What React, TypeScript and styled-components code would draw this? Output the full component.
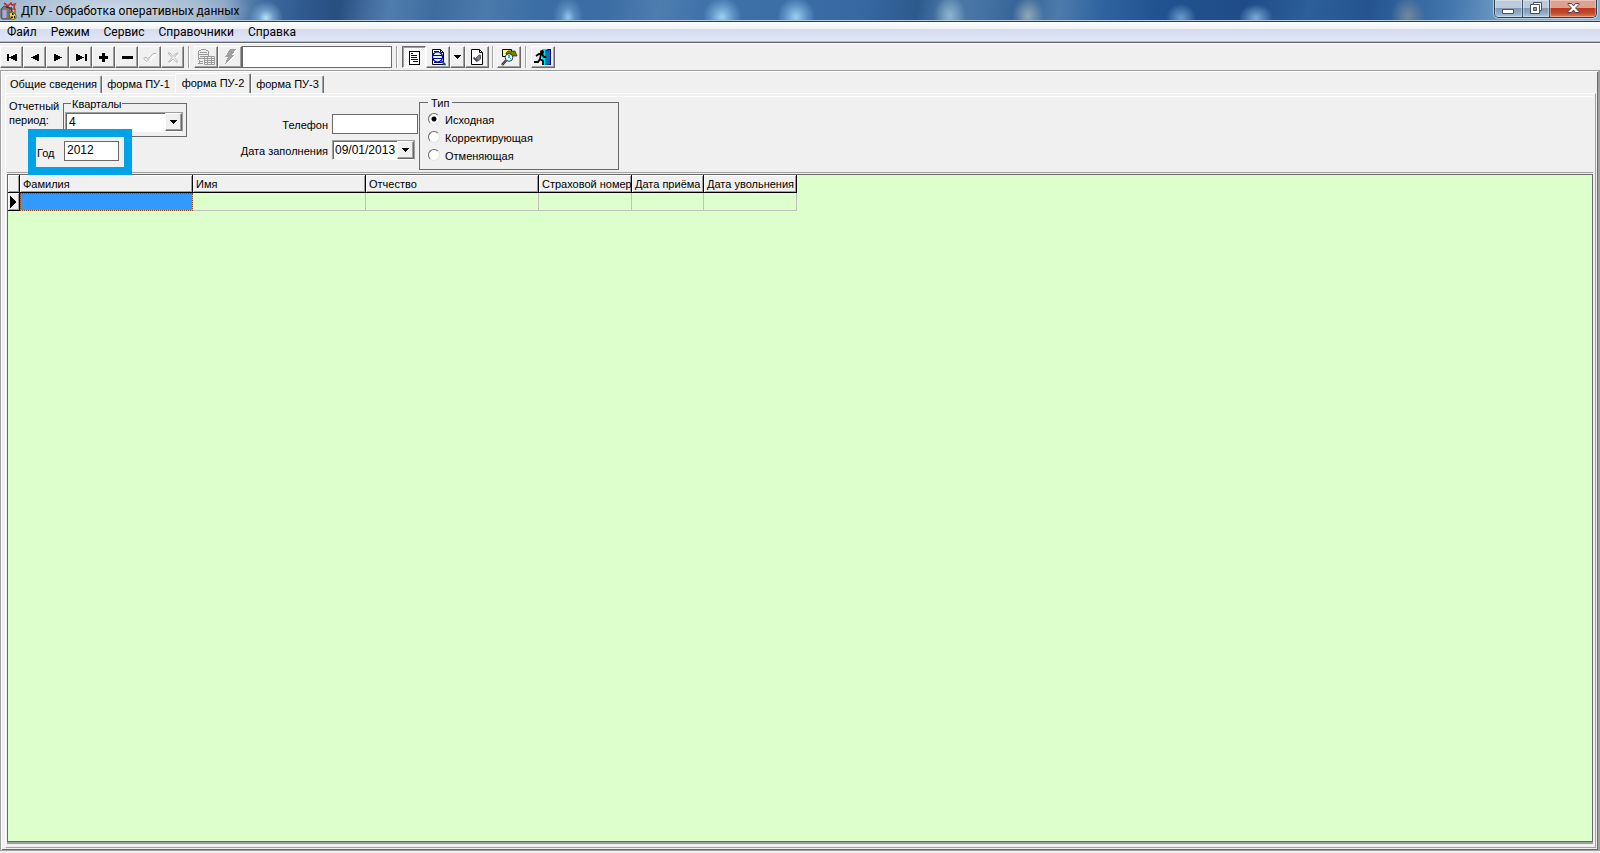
import React, { useState } from 'react';
import styled, { createGlobalStyle, css } from 'styled-components';

const face = '#f0f0f0';
const green = '#dcffcc';
const dark = '#696969';
const gray = '#a0a0a0';

const GlobalStyle = createGlobalStyle`
  *, *::after { box-sizing: border-box; }
  html, body, #root { height: 100%; }
  body { margin: 0; background: ${face}; overflow: hidden; }
  body, button, legend {
    font-family: "Liberation Sans", Arial, sans-serif;
    font-size: 11px;
    line-height: 14px;
    color: #000;
  }
  input, select { font: 12px/14px "Liberation Sans", Arial, sans-serif; color: #000; }
  svg { display: block; }
`;

const Window = styled.div`
  display: flex;
  flex-direction: column;
  min-height: 100vh;
`;

/* ---------- title bar ---------- */

const TitleBar = styled.header`
  display: flex;
  align-items: flex-start;
  height: 22px;
  border-bottom: 1px solid #2b3e57;
  box-shadow: inset 0 -1px 0 #b4cbe0;
  background:
    radial-gradient(ellipse 140px 30px at 112px 10px, rgba(214, 225, 236, .9), rgba(190, 207, 224, .6) 65%, transparent),
    radial-gradient(ellipse 17px 17px at 266px 18px, #b9e1fb, rgba(140, 190, 230, .6) 45%, transparent),
    radial-gradient(ellipse 15px 20px at 568px 17px, #8fc6ee, rgba(120, 170, 215, .5) 45%, transparent),
    radial-gradient(ellipse 19px 20px at 722px 17px, #9bd0f5, rgba(120, 175, 220, .6) 55%, transparent),
    radial-gradient(ellipse 19px 20px at 796px 17px, #9bd0f5, rgba(120, 175, 220, .6) 55%, transparent),
    radial-gradient(ellipse 16px 20px at 950px 16px, #8fb5cf, transparent),
    radial-gradient(ellipse 16px 20px at 1028px 16px, #8fa9b7, transparent),
    radial-gradient(ellipse 15px 14px at 1181px 18px, #6a9ccc, transparent),
    radial-gradient(ellipse 17px 14px at 1256px 18px, #7aabd8, transparent),
    radial-gradient(ellipse 17px 20px at 1408px 16px, #71899b, transparent),
    linear-gradient(100deg, #8fa9c4 0, #7e9dbf 220px, #3f6b9f 260px, #2f5a90 300px, #27507f 335px, #40699a 360px, #4f7dad 385px, #3f6c9f 430px, #4b7aac 480px, #3b6ea5 530px, #3c6da4 600px, #4e7db0 650px, #4173aa 690px, #3768a2 850px, #2d5a8e 905px, #4d7aa8 935px, #4371a2 975px, #346294 1005px, #4d7bab 1045px, #3064a0 1085px, #215390 1140px, #1f4c88 1230px, #2d5f99 1290px, #255490 1350px, #4376ad 1430px, #76a1c9 1490px, #95b5d1 1600px);
`;

const TitleIcon = styled.span`
  padding: 2px 0 0;
`;

const AppTitle = styled.h1`
  flex: 1;
  margin: 0;
  padding: 3px 0 0 4px;
  font: 12px/16px Roboto, sans-serif;
`;

const Caption = styled.div`
  display: flex;
  height: 18px;
  margin-right: 3px;
  border: 1px solid #2c3a4c;
  border-top: 0;
  border-radius: 0 0 5px 5px;
  box-shadow: 0 0 0 1px rgba(225, 238, 250, .6);
  overflow: hidden;
`;

const CaptionButton = styled.button<{ $close?: boolean }>`
  display: flex;
  align-items: center;
  justify-content: center;
  width: ${p => (p.$close ? 47 : 27)}px;
  padding: 0 0 2px;
  border: 0;
  border-left: 1px solid #3f5068;
  box-shadow: inset 0 0 0 1px rgba(255, 255, 255, .35);
  background: ${p =>
    p.$close
      ? 'linear-gradient(#dea08f 0 8px, #bd3720 8px, #c2482c 13px, #dd7f57)'
      : 'linear-gradient(#bccbdc 0 8px, #7f98b4 8px, #91a9c2 13px, #b3cadd)'};
  &:first-child { border-left: 0; }
`;

/* ---------- menu ---------- */

const MenuBar = styled.nav`
  display: flex;
  align-items: center;
  height: 21px;
  border-bottom: 1px solid #62656e;
  box-shadow: inset 0 -1px 0 #b5bdd2;
  background: linear-gradient(#fff 0, #eef1f8 7px, #d6dcef 7px, #e1e6f6 18px);
`;

const MenuItem = styled.button`
  padding: 0 7px 1px;
  border: 0;
  background: none;
  font: 12px/16px Roboto, sans-serif;
`;

/* ---------- toolbar ---------- */

const Toolbar = styled.div`
  display: flex;
  align-items: center;
  height: 27px;
  border-top: 1px solid #fff;
`;

const Group = styled.div`
  display: flex;
`;

const raised = css`
  border: 1px solid;
  border-color: #fff ${dark} ${dark} #fff;
  box-shadow: inset -1px -1px 0 ${gray};
`;

const ToolButton = styled.button<{ $pressed?: boolean; $width?: number }>`
  display: flex;
  align-items: center;
  justify-content: center;
  width: ${p => p.$width ?? 24}px;
  height: 22px;
  padding: 0;
  ${raised}
  background: ${face};
  ${p =>
    p.$pressed &&
    css`
      border-color: ${dark} #fff #fff ${dark};
      box-shadow: inset 1px 1px 0 ${gray};
      background: repeating-conic-gradient(#fff 0 25%, ${face} 0 50%) 0 0 / 2px 2px;
    `}
`;

const Separator = styled.span<{ $tight?: boolean }>`
  width: 2px;
  height: 22px;
  margin: 0 ${p => (p.$tight ? 3 : 4)}px;
  border-left: 1px solid ${gray};
  border-right: 1px solid #fff;
`;

const textBox = css`
  border: 1px solid ${dark};
  border-radius: 0;
  background: #fff;
  outline: 0;
`;

const SearchBox = styled.input`
  width: 150px;
  height: 22px;
  ${textBox}
`;

/* ---------- tabs ---------- */

const TabFrame = styled.main`
  flex: 1;
  display: flex;
  flex-direction: column;
  padding: 2px 2px 2px 4px;
  border: 1px solid ${gray};
  border-right-width: 2px;
  box-shadow: inset 1px 1px 0 #fff, inset -1px -1px 0 ${dark};
  margin-bottom: 2px;
`;

const TabStrip = styled.div`
  display: flex;
  align-items: flex-end;
  height: 20px;
`;

const Tab = styled.button<{ $active?: boolean; $before?: boolean; $wide?: boolean }>`
  width: ${p => (p.$wide ? 97 : p.$active ? 76 : 73)}px;
  height: ${p => (p.$active ? 20 : 18)}px;
  padding: 0 0 ${p => (p.$active ? 2 : 1)}px;
  border: 1px solid;
  border-color: #fff ${dark} transparent #fff;
  border-bottom: 0;
  border-radius: 2px 2px 0 0;
  box-shadow: inset -1px 0 0 ${gray};
  background: ${face};
  white-space: nowrap;
  ${p => p.$before && css`
    border-right-color: transparent;
    box-shadow: none;
  `}
`;

const TabPage = styled.section`
  flex: 1;
  display: flex;
  flex-direction: column;
  border-top: 1px solid #fff;
  border-left: 1px solid #fff;
  padding: 2px 2px 5px 1px;
  border-right: 1px solid ${gray};
  border-bottom: 1px solid ${gray};
`;

/* ---------- form ---------- */

const Form = styled.form`
  display: flex;
  align-items: flex-start;
  height: 77px;
  border-top: 1px solid #fff;
  border-bottom: 1px solid ${gray};
`;

const Period = styled.div`
  display: grid;
  grid-template-columns: 54px 124px;
  width: 222px;
  padding: 1px 0 0 2px;
`;

const PeriodLabel = styled.label`
  padding-top: 1px;
`;

const Quarters = styled.fieldset`
  min-width: 0;
  height: 39px;
  margin: 0;
  padding: 4px 1px 0;
  border: 1px solid ${dark};
`;

const Legend = styled.legend`
  margin-left: 6px;
  padding: 2px 1px 0;
  line-height: 8px;
`;

const Drop = styled.span<{ $wide?: boolean }>`
  display: flex;
  width: ${p => (p.$wide ? 118 : 83)}px;
  height: 20px;
  border: 1px solid;
  border-color: ${gray} ${gray} #fff ${gray};
  box-shadow: inset 1px 1px 0 ${dark};
  background: #fff;
`;

const Select = styled.select`
  flex: 1;
  min-width: 0;
  padding: 0 0 0 3px;
  border: 0;
  outline: 0;
  appearance: none;
  background: none;
`;

const DateInput = styled.input`
  flex: 1;
  min-width: 0;
  padding: 0 0 0 2px;
  border: 0;
  outline: 0;
  background: none;
`;

const DropButton = styled.button`
  display: flex;
  align-items: center;
  justify-content: center;
  width: 17px;
  padding: 0;
  ${raised}
  background: ${face};
`;

const YearRow = styled.div`
  position: relative;
  grid-column: 1 / 3;
  display: flex;
  align-items: flex-end;
  padding: 4px 0 0 28px;
  & > label { width: 27px; padding-bottom: 1px; }
  &::after {
    content: '';
    position: absolute;
    left: 19px;
    top: -8px;
    width: 104px;
    height: 46px;
    border: 8px solid #00a2e8;
    pointer-events: none;
  }
`;

const YearInput = styled.input`
  width: 55px;
  height: 20px;
  padding: 0 2px 2px;
  ${textBox}
`;

const Contacts = styled.div`
  display: grid;
  grid-template-columns: 99px 86px;
  align-items: center;
  gap: 6px 4px;
  padding: 17px 1px 0 0;
  & > label { text-align: right; white-space: nowrap; padding-top: 1px; }
`;

const PhoneInput = styled.input`
  width: 86px;
  height: 20px;
  ${textBox}
`;

const TypeBox = styled.fieldset`
  display: flex;
  flex-direction: column;
  gap: 4px;
  width: 200px;
  height: 73px;
  margin: 0;
  padding: 6px 8px 0;
  border: 1px solid ${dark};
  & > legend { margin-left: 0; padding: 2px 3px 0; }
`;

const RadioLabel = styled.label`
  display: flex;
  align-items: center;
  gap: 5px;
`;

const Radio = styled.input`
  appearance: none;
  width: 12px;
  height: 12px;
  margin: 0 0 2px;
  border: 1px solid;
  border-color: ${dark} #e3e3e3 #e3e3e3 ${dark};
  border-radius: 50%;
  background: #fff;
  &:checked { background: radial-gradient(circle, #000 2px, #fff 3px); }
`;

/* ---------- data grid ---------- */

const GridArea = styled.div`
  flex: 1;
  margin-top: 1px;
  border: 1px solid ${dark};
  box-shadow: 0 2px 0 ${gray};
  background: ${green};
`;

const Grid = styled.table`
  table-layout: fixed;
  width: 789px;
  border-collapse: separate;
  border-spacing: 0;
`;

const Head = styled.th`
  height: 18px;
  padding: 0 0 0 3px;
  border: solid #000;
  border-width: 0 1px 1px 0;
  box-shadow: inset 1px 1px 0 #fff, inset -1px -1px 0 ${gray};
  background: ${face};
  font-weight: normal;
  text-align: left;
  white-space: nowrap;
`;

const Cell = styled.td<{ $selected?: boolean }>`
  height: 18px;
  padding: 0;
  border: solid #c0c0c0;
  border-width: 0 1px 1px 0;
  ${p =>
    p.$selected &&
    css`
      background: #3399ff;
      outline: 1px dotted #8a4a10;
      outline-offset: -1px;
    `}
`;

const Marker = styled.td`
  padding: 0 0 0 2px;
  border: solid #000;
  border-width: 0 1px 1px 0;
  box-shadow: inset 1px 1px 0 #fff, inset -1px -1px 0 ${gray};
  background: ${face};
`;

/* ---------- icons ---------- */

type GlyphProps = { d: string; w?: number; h?: number; fill?: string };

const Glyph = ({ d, w = 16, h = 16, fill = '#000' }: GlyphProps) => (
  <svg width={w} height={h} viewBox={`0 0 ${w} ${h}`} fill={fill} shapeRendering="crispEdges" aria-hidden="true">
    <path d={d} />
  </svg>
);

const Caret = () => <Glyph w={7} h={4} d="M0 0h7v1H0zM1 1h5v1H1zM2 2h3v1H2zM3 3h1v1H3z" />;

const leftTriangle = (x: number) => `M${x} 8.500l8 -4v8z`;
const rightTriangle = (x: number) => `M${x} 4.500l8 4l-8 4z`;

const AppIcon = () => (
  <svg width="17" height="18" viewBox="0 0 17 18" aria-hidden="true">
    <path d="M1 7l3-3 5 1 2 2v10H2L1 15z" fill="#77777c" stroke="#4a4a52" />
    <path d="M2.500 8h4v8h-4z" fill="#a9a9dc" />
    <path d="M10 7h5v8h-5z" fill="#c9bfa0" stroke="#5b4a4a" />
    <path d="M4 1l4 3 3-3 1 2 3-1-1 3 1 3" fill="none" stroke="#c03038" strokeWidth="1.600" />
    <path d="M6 5l4 1M11 5l1 5" stroke="#7a1c22" strokeWidth="1.400" />
    <path d="M9 11l4-1 3 3v3l-3 1.500-3-1.500z" fill="#e9d92a" stroke="#5a4c00" strokeWidth=".8" />
    <path d="M12 11h1.500v2H12zM11 14.500h2v1.500h-2zM14 14h1v2h-1z" fill="#201b00" />
  </svg>
);

const CheckIcon = () => (
  <svg width="16" height="16" viewBox="0 0 16 16" fill="none" aria-hidden="true">
    <path d="M3 10l3 3 8-8" stroke="#fff" strokeWidth="1.500" />
    <path d="M1.500 9.500l2.500-1.500 1.500 2 3-2.500L11 4.500h3M2 10l3 2.500 3-3" stroke="#b4b4b4" />
  </svg>
);

const CancelIcon = () => (
  <svg width="16" height="16" viewBox="0 0 16 16" fill="none" aria-hidden="true">
    <path d="M5 5l9 9M14 5l-9 9" stroke="#fff" strokeWidth="1.500" />
    <path d="M3 4h2l3 3.500L11.500 4H13L9.500 8.500 13 13h-1.500L8 10l-3 3H3.500L7 8.500z" stroke="#b4b4b4" />
  </svg>
);

const DatabaseIcon = () => (
  <svg width="18" height="18" viewBox="0 0 18 18" fill="none" stroke="#9a9a9a" aria-hidden="true">
    <path d="M4 1.500h5M2 2.500h2M9 2.500h2M3 4.500h7M1.500 3v9M11.500 3v5M2 6.500h9M3 8.500h5M2 10.500h5" />
    <path d="M3 13.500h3M2.500 12v4M1 15.500h5" />
    <path d="M7.500 8.500h10v8h-10zM7 10.500h10M7 12.500h10M7 14.500h10M10.500 8v9M14.500 8v9" />
  </svg>
);

const BoltIcon = () => (
  <svg width="16" height="18" viewBox="0 0 16 18" shapeRendering="crispEdges" aria-hidden="true">
    <path d="M9 2h6l-4 6h2l-9 9 3-7H4z" fill="#fff" />
    <path d="M8 1h6l-4 6h2l-9 9 3-7H3z" fill={gray} />
  </svg>
);

const SheetIcon = () => (
  <svg width="16" height="16" viewBox="0 0 16 16" shapeRendering="crispEdges" aria-hidden="true">
    <path d="M3 2h11v14H3z" fill="#000" />
    <path d="M4 3h9v12H4z" fill="#fff" />
    <path d="M5 4h2v1H5zM5 6h6v1H5zM5 8h6v1H5zM5 10h7v1H5zM7 12h5v1H7z" fill="#000080" />
  </svg>
);

const PreviewIcon = () => (
  <svg width="18" height="18" viewBox="0 0 18 18" aria-hidden="true">
    <path d="M3.500 1.500h8l3 3v12h-11z" fill="#fff" stroke="#000" />
    <path d="M11.500 1.500v3h3" fill="none" stroke="#000" />
    <path d="M5 3.500h5M5 14.500h8" stroke="#0000a0" />
    <circle cx="8.500" cy="9" r="5" fill="#e4f4ff" stroke="#0000b0" strokeWidth="1.200" />
    <path d="M4 7.500h9M4 10.500h9" stroke="#0000a0" strokeWidth="1.200" />
    <path d="M12.500 13l4 4" stroke="#1c4f9c" strokeWidth="2" />
  </svg>
);

const DesignIcon = () => (
  <svg width="16" height="16" viewBox="0 0 16 16" aria-hidden="true">
    <path d="M2.500 .5h8l3 3v12h-11z" fill="#fff" stroke="#000" />
    <path d="M10.500 .5v3h3" fill="none" stroke="#000" />
    <path d="M7 9l3-3h1.500v4L9 12z" fill="#808080" stroke="#606060" />
    <path d="M4.500 8.500l4 4" stroke="#404080" strokeWidth="1.800" />
  </svg>
);

const FindIcon = () => (
  <svg width="18" height="18" viewBox="0 0 18 18" aria-hidden="true">
    <path d="M2.500 1.500h9v7h-9z" fill="#ffff66" stroke="#000" />
    <path d="M6 5l2-2h7l2 5h-5l-1-2H6z" fill="#808000" stroke="#222200" strokeWidth=".7" />
    <circle cx="9" cy="9.500" r="3.800" fill="#e8ffff" stroke="#333" />
    <path d="M8 7h2v3H8zM10 10h1v1h-1z" fill="#00d8e8" />
    <path d="M6 12.500l-4 4.500" stroke="#101060" strokeWidth="2.400" />
    <path d="M6 12.500l-4 4.500" stroke="#b8a040" strokeWidth=".8" />
  </svg>
);

const ExitIcon = () => (
  <svg width="18" height="18" viewBox="0 0 18 18" aria-hidden="true">
    <path d="M8 1h9v16H8z" fill="#000080" />
    <path d="M8 1h6l-3 2v14H8z" fill="#00e0f0" />
    <path d="M11 3l5-1v14l-5 1z" fill="#0076a8" />
    <circle cx="8" cy="4" r="2" fill="#000" />
    <path d="M2 8l3-2h3l2 3 2 0M7 6l-1 5 3 2v4M6 11l-2 3H0" fill="none" stroke="#000" strokeWidth="1.800" />
  </svg>
);

const MinimizeIcon = () => (
  <svg width="13" height="12" viewBox="0 0 13 12" aria-hidden="true">
    <path d="M.5 7.500h11v4H.5z" fill="#fff" stroke="#4a4f5c" />
  </svg>
);

const RestoreIcon = () => (
  <svg width="13" height="12" viewBox="0 0 13 12" aria-hidden="true">
    <path d="M3.500 .5h8v8h-8z" fill="#fff" stroke="#4a4f5c" />
    <path d="M.5 2.500h9v9h-9z" fill="#fff" stroke="#4a4f5c" />
    <path d="M3.500 5.500h3v3h-3z" fill="#8da5bf" stroke="#4a4f5c" />
  </svg>
);

const CloseIcon = () => (
  <svg width="13" height="12" viewBox="0 0 13 12" aria-hidden="true">
    <path d="M1 1.500h3.500l2 2.500 2-2.500H12v1L8.500 6l3.500 3.500v1H8.500L6.500 8l-2 2.500H1v-1L4.500 6 1 2.500z" fill="#fff" stroke="#4b4450" />
  </svg>
);

/* ---------- data ---------- */

const menu = ['Файл', 'Режим', 'Сервис', 'Справочники', 'Справка'];

const navigator: { label: string; icon: React.ReactNode }[] = [
  { label: 'Первая запись', icon: <Glyph d={`M3 5h2v7H3z${leftTriangle(5)}`} /> },
  { label: 'Предыдущая запись', icon: <Glyph d={leftTriangle(4)} /> },
  { label: 'Следующая запись', icon: <Glyph d={rightTriangle(4)} /> },
  { label: 'Последняя запись', icon: <Glyph d={`${rightTriangle(3)}M12 5h2v7h-2z`} /> },
  { label: 'Добавить', icon: <Glyph d="M6 4h3v3h3v3H9v3H6v-3H3V7h3z" /> },
  { label: 'Удалить', icon: <Glyph d="M3 7h11v3H3z" /> },
  { label: 'Сохранить', icon: <CheckIcon /> },
  { label: 'Отменить', icon: <CancelIcon /> },
];

const tabs = ['Общие сведения', 'форма ПУ-1', 'форма ПУ-2', 'форма ПУ-3'];
const kinds = ['Исходная', 'Корректирующая', 'Отменяющая'];
const columns = [
  { title: 'Фамилия', width: 173 },
  { title: 'Имя', width: 173 },
  { title: 'Отчество', width: 173 },
  { title: 'Страховой номер', width: 93 },
  { title: 'Дата приёма', width: 72 },
  { title: 'Дата увольнения', width: 93 },
];

export default function App() {
  const [tab, setTab] = useState(2);
  const [kind, setKind] = useState(0);

  return (
    <Window>
      <GlobalStyle />
      <TitleBar>
        <TitleIcon><AppIcon /></TitleIcon>
        <AppTitle>ДПУ - Обработка оперативных данных</AppTitle>
        <Caption>
          <CaptionButton aria-label="Свернуть"><MinimizeIcon /></CaptionButton>
          <CaptionButton aria-label="Восстановить"><RestoreIcon /></CaptionButton>
          <CaptionButton $close aria-label="Закрыть"><CloseIcon /></CaptionButton>
        </Caption>
      </TitleBar>

      <MenuBar>
        {menu.map(item => <MenuItem key={item}>{item}</MenuItem>)}
      </MenuBar>

      <Toolbar>
        <Group>
          {navigator.map(n => <ToolButton key={n.label} $width={23} aria-label={n.label}>{n.icon}</ToolButton>)}
        </Group>
        <Separator />
        <Group>
          <ToolButton aria-label="Таблица"><DatabaseIcon /></ToolButton>
          <ToolButton aria-label="Выполнить"><BoltIcon /></ToolButton>
          <SearchBox aria-label="Поиск" />
        </Group>
        <Separator />
        <Group>
          <ToolButton $pressed aria-label="Документ"><SheetIcon /></ToolButton>
          <ToolButton aria-label="Просмотр"><PreviewIcon /></ToolButton>
          <ToolButton $width={15} aria-label="Варианты просмотра"><Caret /></ToolButton>
          <ToolButton aria-label="Правка"><DesignIcon /></ToolButton>
        </Group>
        <Separator $tight />
        <ToolButton aria-label="Найти"><FindIcon /></ToolButton>
        <Separator />
        <ToolButton aria-label="Выход"><ExitIcon /></ToolButton>
      </Toolbar>

      <TabFrame>
        <TabStrip role="tablist">
          {tabs.map((name, i) => (
            <Tab
              key={name}
              role="tab"
              aria-selected={i === tab}
              $active={i === tab}
              $before={i === tab - 1}
              $wide={i === 0}
              onClick={() => setTab(i)}
            >
              {name}
            </Tab>
          ))}
        </TabStrip>

        <TabPage>
          <Form onSubmit={e => e.preventDefault()}>
            <Period>
              <PeriodLabel htmlFor="quarter">Отчетный период:</PeriodLabel>
              <Quarters>
                <Legend>Кварталы</Legend>
                <Drop $wide>
                  <Select id="quarter" defaultValue="4">
                    {['1', '2', '3', '4'].map(q => <option key={q}>{q}</option>)}
                  </Select>
                  <DropButton type="button" aria-label="Открыть список"><Caret /></DropButton>
                </Drop>
              </Quarters>
              <YearRow>
                <label htmlFor="year">Год</label>
                <YearInput id="year" defaultValue="2012" />
              </YearRow>
            </Period>

            <Contacts>
              <label htmlFor="phone">Телефон</label>
              <PhoneInput id="phone" />
              <label htmlFor="date">Дата заполнения</label>
              <Drop>
                <DateInput id="date" defaultValue="09/01/2013" />
                <DropButton type="button" aria-label="Открыть календарь"><Caret /></DropButton>
              </Drop>
            </Contacts>

            <TypeBox>
              <Legend>Тип</Legend>
              {kinds.map((name, i) => (
                <RadioLabel key={name}>
                  <Radio type="radio" name="kind" checked={i === kind} onChange={() => setKind(i)} />
                  {name}
                </RadioLabel>
              ))}
            </TypeBox>
          </Form>

          <GridArea>
            <Grid>
              <colgroup>
                <col style={{ width: 12 }} />
                {columns.map(c => <col key={c.title} style={{ width: c.width }} />)}
              </colgroup>
              <thead>
                <tr>
                  <Head />
                  {columns.map(c => <Head key={c.title}>{c.title}</Head>)}
                </tr>
              </thead>
              <tbody>
                <tr>
                  <Marker><Glyph w={7} h={12} d="M0 0l6 6l-6 6z" /></Marker>
                  {columns.map((c, i) => <Cell key={c.title} $selected={i === 0} />)}
                </tr>
              </tbody>
            </Grid>
          </GridArea>
        </TabPage>
      </TabFrame>
    </Window>
  );
}
